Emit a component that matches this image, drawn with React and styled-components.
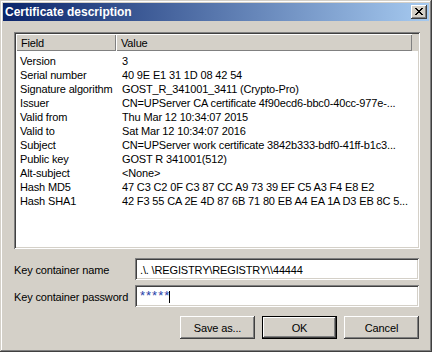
import React from "react";
import styled, { createGlobalStyle } from "styled-components";

const Global = createGlobalStyle`
  html, body { margin: 0; padding: 0; background: #d4d0c8; }
  * { box-sizing: border-box; }
`;

const raised = `
  box-shadow: inset -1px -1px #404040, inset 1px 1px #fff,
    inset -2px -2px #808080, inset 2px 2px #d4d0c8;
`;
const sunken = `
  box-shadow: inset 1px 1px #808080, inset -1px -1px #fff,
    inset 2px 2px #404040, inset -2px -2px #d4d0c8;
`;

const Window = styled.div`
  width: 432px;
  height: 352px;
  background: #d4d0c8;
  padding: 3px;
  display: flex;
  flex-direction: column;
  box-shadow: inset -1px -1px #404040, inset 1px 1px #d4d0c8,
    inset -2px -2px #808080, inset 2px 2px #fff;
  font-family: "Liberation Sans", Arial, sans-serif;
  font-size: 11px;
  letter-spacing: -0.15px;
  color: #000;
`;

const TitleBar = styled.div`
  height: 18px;
  flex: none;
  display: flex;
  align-items: center;
  padding: 0 2px 0 2px;
  background: linear-gradient(to right, #0a246a, #a6caf0);
  color: #fff;
  font-weight: bold;
  font-size: 12px;
  letter-spacing: 0;
`;

const TitleText = styled.span`
  flex: 1;
  line-height: 18px;
  white-space: nowrap;
`;

const CloseButton = styled.div`
  width: 16px;
  height: 14px;
  background: #d4d0c8;
  ${raised}
  display: flex;
  align-items: flex-start;
  padding: 3px 0 0 4px;
`;

const Body = styled.div`
  flex: 1;
  padding: 11px 9px 0 11px;
  display: flex;
  flex-direction: column;
`;

const ListBox = styled.div`
  height: 217px;
  flex: none;
  background: #fff;
  padding: 2px;
  ${sunken}
  overflow: hidden;
  display: flex;
  flex-direction: column;
`;

const Header = styled.div`
  display: flex;
  height: 17px;
  flex: none;
  background: #d4d0c8;
`;

const HeaderCell = styled.div`
  width: ${(p) => p.$w}px;
  flex: none;
  height: 17px;
  line-height: 17px;
  padding: 1px 0 0 5px;
  box-shadow: inset 1px 1px #fff, inset -1px -1px #808080;
  white-space: nowrap;
`;

const Rows = styled.div`
  padding-top: 3px;
`;

const Row = styled.div`
  display: flex;
  height: 14px;
  line-height: 14px;
  white-space: nowrap;
`;

const FieldCell = styled.div`
  width: 100px;
  flex: none;
  padding-left: 4px;
  overflow: hidden;
`;

const ValueCell = styled.div`
  flex: 1;
  min-width: 0;
  padding-left: 6px;
  overflow: hidden;
`;

const Form = styled.div`
  margin-top: 9px;
  display: grid;
  grid-template-columns: 121px 284px;
  grid-auto-rows: 22px;
  row-gap: 5px;
`;

const Label = styled.div`
  display: flex;
  align-items: center;
  padding-top: 2px;
  white-space: nowrap;
`;

const Input = styled.div`
  background: #fff;
  ${sunken}
  display: flex;
  align-items: center;
  padding: 1px 0 0 5px;
  white-space: nowrap;
  overflow: hidden;
`;

const Stars = styled.span`
  color: #1f3fa8;
  font-size: 13px;
  letter-spacing: 1px;
  align-self: flex-start;
  margin-top: 3px;
  line-height: 13px;
`;

const Caret = styled.span`
  width: 1px;
  height: 12px;
  background: #000;
  margin-left: -1px;
`;

const ButtonRow = styled.div`
  margin-top: 9px;
  display: flex;
  justify-content: flex-end;
  gap: 7px;
  padding-right: 1px;
`;

const Button = styled.div`
  width: 75px;
  height: 23px;
  background: #d4d0c8;
  display: flex;
  align-items: center;
  justify-content: center;
  padding-top: 1px;
  ${(p) =>
    p.$default
      ? `box-shadow: inset 0 0 0 1px #000, inset -2px -2px #404040, inset 2px 2px #fff,
          inset -3px -3px #808080, inset 3px 3px #d4d0c8;`
      : raised}
`;

const CloseGlyph = () => (
  <svg width="8" height="7" viewBox="0 0 8 7" shapeRendering="crispEdges">
    <path
      fill="#000"
      d="M0 0h2v1H0zM6 0h2v1H6zM1 1h2v1H1zM5 1h2v1H5zM2 2h4v1H2zM3 3h2v1H3zM2 4h4v1H2zM1 5h2v1H1zM5 5h2v1H5zM0 6h2v1H0zM6 6h2v1H6z"
    />
  </svg>
);

const rows = [
  ["Version", "3"],
  ["Serial number", "40 9E E1 31 1D 08 42 54"],
  ["Signature algorithm", "GOST_R_341001_3411 (Crypto-Pro)"],
  ["Issuer", "CN=UPServer CA certificate 4f90ecd6-bbc0-40cc-977e-..."],
  ["Valid from", "Thu Mar 12 10:34:07 2015"],
  ["Valid to", "Sat Mar 12 10:34:07 2016"],
  ["Subject", "CN=UPServer work certificate 3842b333-bdf0-41ff-b1c3..."],
  ["Public key", "GOST R 341001(512)"],
  ["Alt-subject", "<None>"],
  ["Hash MD5", "47 C3 C2 0F C3 87 CC A9 73 39 EF C5 A3 F4 E8 E2"],
  ["Hash SHA1", "42 F3 55 CA 2E 4D 87 6B 71 80 EB A4 EA 1A D3 EB 8C 5..."],
];

export default function App() {
  return (
    <>
      <Global />
      <Window>
        <TitleBar>
          <TitleText>Certificate description</TitleText>
          <CloseButton>
            <CloseGlyph />
          </CloseButton>
        </TitleBar>
        <Body>
          <ListBox>
            <Header>
              <HeaderCell $w={100}>Field</HeaderCell>
              <HeaderCell $w={296}>Value</HeaderCell>
            </Header>
            <Rows>
              {rows.map(([f, v]) => (
                <Row key={f}>
                  <FieldCell>{f}</FieldCell>
                  <ValueCell>{v}</ValueCell>
                </Row>
              ))}
            </Rows>
          </ListBox>
          <Form>
            <Label>Key container name</Label>
            <Input>{".\\. \\REGISTRY\\REGISTRY\\\\44444"}</Input>
            <Label>Key container password</Label>
            <Input>
              <Stars>*****</Stars>
              <Caret />
            </Input>
          </Form>
          <ButtonRow>
            <Button>Save as...</Button>
            <Button $default>OK</Button>
            <Button>Cancel</Button>
          </ButtonRow>
        </Body>
      </Window>
    </>
  );
}
